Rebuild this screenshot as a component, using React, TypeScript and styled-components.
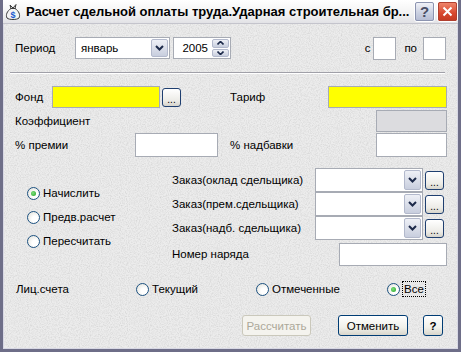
import React from "react";
import styled, { createGlobalStyle } from "styled-components";

const noise = encodeURIComponent(
  `<svg xmlns="http://www.w3.org/2000/svg" width="120" height="120"><filter id="n"><feTurbulence type="fractalNoise" baseFrequency="0.9" numOctaves="2" stitchTiles="stitch"/><feColorMatrix values="0 0 0 0 0.5  0 0 0 0 0.5  0 0 0 0 0.5  0 0 0 0.9 -0.35"/></filter><rect width="120" height="120" filter="url(#n)"/></svg>`
);

const GlobalStyle = createGlobalStyle`
  html, body {
    margin: 0;
    padding: 0;
    background: #ffffff;
  }
  body {
    font-family: "Liberation Sans", Arial, sans-serif;
    font-size: 11.5px;
    color: #000;
  }
`;

const Window = styled.div`
  width: 461px;
  height: 352px;
  box-sizing: border-box;
  display: flex;
  flex-direction: column;
  border: 3px solid #6e6e88;
  border-top: 0;
  box-shadow: inset 0 0 0 1px #d8d8e4;
  background: #ececec url("data:image/svg+xml,${noise}");
`;

const TitleBar = styled.div`
  height: 24px;
  flex: none;
  display: flex;
  align-items: center;
  padding: 0 0 0 1px;
  background: linear-gradient(#ffffff, #f2f2f2 60%, #e2e2e6);
  border-bottom: 1px solid #c4c4cc;
  box-sizing: border-box;
`;

const TitleText = styled.div`
  flex: 1;
  margin-left: 4px;
  font-weight: bold;
  font-size: 13px;
  white-space: nowrap;
  overflow: hidden;
`;

const CaptionButton = styled.div<{ $close?: boolean }>`
  width: 21px;
  height: 21px;
  box-sizing: border-box;
  margin-left: 2px;
  border: 1px solid #ffffff;
  border-radius: 3px;
  display: flex;
  align-items: center;
  justify-content: center;
  outline: 1px solid ${(p) => (p.$close ? "#b04030" : "#8c94b0")};
  outline-offset: -2px;
  background: ${(p) =>
    p.$close
      ? "linear-gradient(#f08a70, #d8482e 60%, #c23a22)"
      : "linear-gradient(#f4f5fa, #c9cfe0 60%, #b4bbd2)"};
  color: ${(p) => (p.$close ? "#fff" : "#4a4f66")};
  font-weight: bold;
  font-size: 15px;
`;

const Content = styled.div`
  flex: 1;
  display: flex;
  flex-direction: column;
  padding: 13px 11px 0 12px;
`;

const Row = styled.div<{ $h: number; $mt?: number }>`
  display: flex;
  align-items: center;
  height: ${(p) => p.$h}px;
  margin-top: ${(p) => p.$mt ?? 0}px;
  flex: none;
`;

const Label = styled.span<{ $w?: number; $ml?: number }>`
  width: ${(p) => (p.$w ? `${p.$w}px` : "auto")};
  margin-left: ${(p) => p.$ml ?? 0}px;
  flex: none;
  white-space: nowrap;
`;

const Spacer = styled.div`
  flex: 1;
`;

const Field = styled.div<{ $w: number; $h?: number; $bg?: string; $mr?: number }>`
  width: ${(p) => p.$w}px;
  height: ${(p) => p.$h ?? 22}px;
  margin-right: ${(p) => p.$mr ?? 0}px;
  box-sizing: border-box;
  border: 1px solid #a7abb4;
  background: ${(p) => p.$bg ?? "#ffffff"};
  flex: none;
`;

const Separator = styled.div`
  height: 1px;
  margin: 13px 2px 0 -5px;
  background: #a0a0a8;
  border-bottom: 1px solid #ffffff;
  flex: none;
`;

const Combo = styled.div<{ $w: number; $h?: number }>`
  width: ${(p) => p.$w}px;
  height: ${(p) => p.$h ?? 22}px;
  box-sizing: border-box;
  border: 1px solid #a7abb4;
  background: #fff;
  display: flex;
  align-items: stretch;
  flex: none;
`;

const ComboText = styled.span<{ $right?: boolean }>`
  flex: 1;
  display: flex;
  align-items: center;
  justify-content: ${(p) => (p.$right ? "flex-end" : "flex-start")};
  padding: 0 3px 0 5px;
`;

const DropButton = styled.div`
  width: 17px;
  margin: 1px;
  box-sizing: border-box;
  border: 1px solid #b3b9cc;
  border-radius: 2px;
  background: linear-gradient(#eef0f6, #c8cede);
  display: flex;
  align-items: center;
  justify-content: center;
`;

const SpinColumn = styled.div`
  width: 17px;
  margin: 1px;
  display: flex;
  flex-direction: column;
  gap: 1px;
`;

const SpinButton = styled.div`
  flex: 1;
  box-sizing: border-box;
  border: 1px solid #b3b9cc;
  border-radius: 2px;
  background: linear-gradient(#eef0f6, #c8cede);
  display: flex;
  align-items: center;
  justify-content: center;
`;

const EllipsisButton = styled.div<{ $ml?: number }>`
  width: 19px;
  height: 19px;
  margin-left: ${(p) => p.$ml ?? 2}px;
  box-sizing: border-box;
  border: 1px solid #1f3f70;
  border-radius: 3px;
  background: linear-gradient(#ffffff, #ecebe6 70%, #d6d4cc);
  display: flex;
  align-items: flex-end;
  justify-content: center;
  font-size: 10px;
  line-height: 12px;
  color: #000;
  flex: none;
`;

const Middle = styled.div`
  display: grid;
  grid-template-columns: 157px 143px 1fr;
  grid-template-rows: 24px 24px 24px 26px;
  margin-top: 11px;
  flex: none;
`;

const RadioGroup = styled.div`
  grid-row: 1 / span 4;
  display: flex;
  flex-direction: column;
  padding: 13px 0 0 12px;
`;

const RadioItem = styled.div<{ $w?: number }>`
  height: 24px;
  width: ${(p) => (p.$w ? `${p.$w}px` : "auto")};
  display: flex;
  align-items: center;
  gap: 3px;
  flex: none;
`;

const RadioCircle = styled.span<{ $checked?: boolean }>`
  width: 13px;
  height: 13px;
  box-sizing: border-box;
  border-radius: 50%;
  border: 1px solid #1c5180;
  background: radial-gradient(circle at 65% 65%, #ffffff 30%, #dcdcd4 100%);
  display: flex;
  align-items: center;
  justify-content: center;
  flex: none;

  &::after {
    content: "";
    display: ${(p) => (p.$checked ? "block" : "none")};
    width: 5px;
    height: 5px;
    border-radius: 50%;
    background: radial-gradient(circle at 40% 40%, #7ee07e, #21a121);
  }
`;

const FocusText = styled.span`
  outline: 1px dotted #000;
  padding: 1px 1px;
`;

const MidLabel = styled.div`
  display: flex;
  align-items: center;
  white-space: nowrap;
`;

const MidControl = styled.div<{ $end?: boolean }>`
  display: flex;
  align-items: ${(p) => (p.$end ? "flex-end" : "center")};
  justify-content: ${(p) => (p.$end ? "flex-end" : "flex-start")};
`;

const ButtonRow = styled.div`
  display: flex;
  justify-content: flex-end;
  align-items: center;
  height: 21px;
  margin-top: 16px;
  padding-right: 4px;
  flex: none;
`;

const PushButton = styled.div<{ $w: number; $ml?: number; $disabled?: boolean }>`
  width: ${(p) => p.$w}px;
  height: 21px;
  margin-left: ${(p) => p.$ml ?? 0}px;
  box-sizing: border-box;
  border: 1px solid ${(p) => (p.$disabled ? "#cac8bb" : "#003c74")};
  border-radius: 3px;
  background: ${(p) =>
    p.$disabled ? "#f4f3ee" : "linear-gradient(#ffffff, #f0f0ea 60%, #d8d6cc)"};
  color: ${(p) => (p.$disabled ? "#aca899" : "#000")};
  display: flex;
  align-items: center;
  justify-content: center;
  font-weight: ${(p) => (p.$w < 30 ? "bold" : "normal")};
`;

const Chevron = () => (
  <svg width="9" height="6" viewBox="0 0 9 6">
    <path d="M1 1 L4.5 4.5 L8 1" fill="none" stroke="#1d2a4a" strokeWidth="2" />
  </svg>
);

const SmallArrow = ({ up }: { up?: boolean }) => (
  <svg width="7" height="4" viewBox="0 0 7 4">
    <path
      d={up ? "M0.5 3.5 L3.5 0.5 L6.5 3.5" : "M0.5 0.5 L3.5 3.5 L6.5 0.5"}
      fill="none"
      stroke="#1d2a4a"
      strokeWidth="1.6"
    />
  </svg>
);

const BagIcon = () => (
  <svg width="18" height="18" viewBox="0 0 18 18">
    <path
      d="M6 2 L9 5 L12 1.5 L11 5.5 C15 8 16.5 12 15 15 C13 17 5 17 3 15 C1.5 12 3 8 7 5.5 Z"
      fill="#f4f4f4"
      stroke="#3c3c3c"
      strokeWidth="1"
    />
    <path d="M6.5 5.5 L11.5 5.5" stroke="#3c3c3c" strokeWidth="1" />
    <text x="9" y="14.5" fontSize="9" fontWeight="bold" textAnchor="middle" fill="#1a5ad0" fontFamily="Liberation Sans, sans-serif">
      $
    </text>
  </svg>
);

const CloseGlyph = () => (
  <svg width="11" height="11" viewBox="0 0 11 11">
    <path d="M1.5 1.5 L9.5 9.5 M9.5 1.5 L1.5 9.5" stroke="#fff" strokeWidth="2" />
  </svg>
);

const ComboWithButton = () => (
  <MidControl>
    <Combo $w={108} $h={24}>
      <ComboText />
      <DropButton>
        <Chevron />
      </DropButton>
    </Combo>
    <EllipsisButton>...</EllipsisButton>
  </MidControl>
);

const App: React.FC = () => {
  return (
    <>
      <GlobalStyle />
      <Window>
        <TitleBar>
          <BagIcon />
          <TitleText>Расчет сдельной оплаты труда.Ударная строительная бр...</TitleText>
          <CaptionButton>?</CaptionButton>
          <CaptionButton $close>
            <CloseGlyph />
          </CaptionButton>
        </TitleBar>
        <Content>
          <Row $h={22}>
            <Label $w={60}>Период</Label>
            <Combo $w={95}>
              <ComboText>январь</ComboText>
              <DropButton>
                <Chevron />
              </DropButton>
            </Combo>
            <Combo $w={58} style={{ marginLeft: 3 }}>
              <ComboText $right>2005</ComboText>
              <SpinColumn>
                <SpinButton>
                  <SmallArrow up />
                </SpinButton>
                <SpinButton>
                  <SmallArrow />
                </SpinButton>
              </SpinColumn>
            </Combo>
            <Spacer />
            <Label>с</Label>
            <Field $w={23} $h={23} style={{ marginLeft: 3 }} />
            <Label $ml={8}>по</Label>
            <Field $w={23} $h={23} $mr={1} style={{ marginLeft: 6 }} />
          </Row>
          <Separator />
          <Row $h={22} $mt={12}>
            <Label $w={37}>Фонд</Label>
            <Field $w={108} $bg="#ffff00" />
            <EllipsisButton>...</EllipsisButton>
            <Label $ml={49}>Тариф</Label>
            <Spacer />
            <Field $w={119} $bg="#ffff00" />
          </Row>
          <Row $h={22} $mt={2}>
            <Label>Коэффициент</Label>
            <Spacer />
            <Field $w={71} $bg="#dcdcdf" />
          </Row>
          <Row $h={24} $mt={1}>
            <Label $w={120}>% премии</Label>
            <Field $w={83} $h={24} />
            <Label $ml={12}>% надбавки</Label>
            <Spacer />
            <Field $w={71} $h={24} />
          </Row>
          <Middle>
            <RadioGroup>
              <RadioItem>
                <RadioCircle $checked />
                Начислить
              </RadioItem>
              <RadioItem>
                <RadioCircle />
                Предв.расчет
              </RadioItem>
              <RadioItem>
                <RadioCircle />
                Пересчитать
              </RadioItem>
            </RadioGroup>
            <MidLabel>Заказ(оклад сдельщика)</MidLabel>
            <ComboWithButton />
            <MidLabel>Заказ(прем.сдельщика)</MidLabel>
            <ComboWithButton />
            <MidLabel>Заказ(надб. сдельщика)</MidLabel>
            <ComboWithButton />
            <MidLabel style={{ paddingTop: 2 }}>Номер наряда</MidLabel>
            <MidControl $end>
              <Field $w={108} $h={23} />
            </MidControl>
          </Middle>
          <Row $h={20} $mt={13}>
            <Label $w={120} $ml={1}>Лиц.счета</Label>
            <RadioItem $w={120}>
              <RadioCircle />
              Текущий
            </RadioItem>
            <RadioItem $w={131}>
              <RadioCircle />
              Отмеченные
            </RadioItem>
            <RadioItem>
              <RadioCircle $checked />
              <FocusText>Все</FocusText>
            </RadioItem>
          </Row>
          <ButtonRow>
            <PushButton $w={69} $disabled>
              Рассчитать
            </PushButton>
            <PushButton $w={70} $ml={27}>
              Отменить
            </PushButton>
            <PushButton $w={20} $ml={15}>
              ?
            </PushButton>
          </ButtonRow>
        </Content>
      </Window>
    </>
  );
};

export default App;
